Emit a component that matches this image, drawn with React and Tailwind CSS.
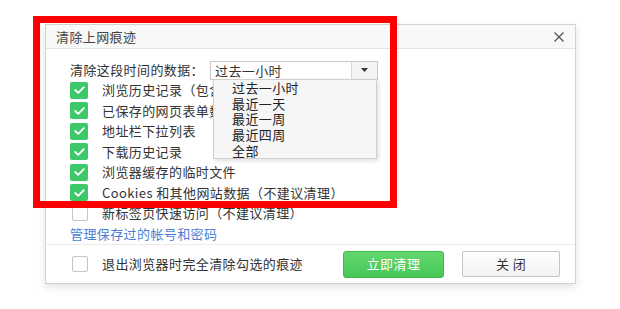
import React from "react";

function Check({ checked }) {
  if (checked) {
    return (
      <span className="flex h-[17px] w-[18px] items-center justify-center rounded-[2px] bg-[#3dc86a]">
        <svg width="11" height="8" viewBox="0 0 11 8" fill="none">
          <path d="M1.2 4 L4.2 6.8 L9.8 1.2" stroke="#fff" strokeWidth="1.8" strokeLinecap="round" strokeLinejoin="round" />
        </svg>
      </span>
    );
  }
  return <span className="ml-[2px] block h-[16px] w-[16px] rounded-[2px] border border-[#c4c4c4] bg-white" />;
}

function Row({ checked, children }) {
  return (
    <div className="flex h-[20.5px] items-center">
      <div className="w-[32px]">
        <Check checked={checked} />
      </div>
      <span className="text-[13px] leading-[18px] tracking-[0.4px] text-[#333]">{children}</span>
    </div>
  );
}

export default function App() {
  const rows = [
    [true, "浏览历史记录（包含访问过的网站）"],
    [true, "已保存的网页表单数据"],
    [true, "地址栏下拉列表"],
    [true, "下载历史记录"],
    [true, "浏览器缓存的临时文件"],
    [true, "Cookies 和其他网站数据（不建议清理）"],
    [false, "新标签页快速访问（不建议清理）"],
  ];
  return (
    <div
      className="relative h-[309px] w-[620px] overflow-hidden bg-white"
      style={{ fontFamily: '"Noto Sans CJK SC", "Noto Sans", sans-serif' }}
    >
      <div className="pl-[45px] pt-[24px]">
        <div className="w-[531px] border border-[#d2d2d2] bg-white shadow-[0_3px_8px_rgba(0,0,0,0.12)]">
          <div className="flex h-[24px] items-center justify-between border-b border-[#e4e4e4] bg-[#f8f8f8] pl-[10px] pr-[11px]">
            <span className="text-[13px] leading-[18px] tracking-[0.4px] text-[#444]">清除上网痕迹</span>
            <svg width="10" height="10" viewBox="0 0 10 10">
              <path d="M0.5 0.5 L9.5 9.5 M9.5 0.5 L0.5 9.5" stroke="#555" strokeWidth="1.3" />
            </svg>
          </div>
          <div className="relative pl-[24px] pt-[12px]">
            <div className="flex h-[18px] items-center">
              <span className="w-[140px] text-[13px] leading-[18px] tracking-[0.4px] text-[#333]">清除这段时间的数据：</span>
              <div className="flex h-[19px] w-[168px] border border-[#c8c8c8] bg-white">
                <span className="flex-1 pl-[4px] text-[13px] leading-[17px] tracking-[0.4px] text-[#333]">过去一小时</span>
                <div className="flex w-[26px] items-center justify-center border-l border-[#d8d8d8] bg-[#f4f4f4]">
                  <svg width="7" height="4" viewBox="0 0 7 4">
                    <path d="M0 0 L7 0 L3.5 4 Z" fill="#333" />
                  </svg>
                </div>
              </div>
            </div>
            <div className="absolute left-[167px] top-[30px] z-10 flex h-[80px] w-[164px] flex-col border border-[#cfcfcf] bg-[#f6f6f6] pl-[18px] shadow-[2px_2px_4px_rgba(0,0,0,0.12)]">
              {["过去一小时", "最近一天", "最近一周", "最近四周", "全部"].map((t) => (
                <div key={t} className="flex h-[15.8px] items-center text-[13px] leading-[15px] tracking-[0.4px] text-[#222]">
                  {t}
                </div>
              ))}
            </div>
            <div className="pt-[1px]">
              {rows.map(([c, t]) => (
                <Row key={t} checked={c}>
                  {t}
                </Row>
              ))}
            </div>
            <div className="flex h-[20.5px] items-center text-[13px] leading-[18px] tracking-[0.4px] text-[#4b7fd6]">管理保存过的帐号和密码</div>
          </div>
          <div className="flex h-[39px] items-center border-t border-[#ececec] pl-[24px]">
            <div className="w-[32px]">
              <Check checked={false} />
            </div>
            <span className="text-[13px] leading-[18px] tracking-[0.4px] text-[#333]">退出浏览器时完全清除勾选的痕迹</span>
            <div className="ml-auto flex gap-[18px] pr-[15px]">
              <button className="flex h-[27px] w-[101px] items-center justify-center rounded-[3px] border border-[#3fbb52] bg-gradient-to-b from-[#63d66d] to-[#45c75a] text-[13px] leading-[18px] tracking-[0.4px] text-white">
                立即清理
              </button>
              <button className="flex h-[26px] w-[98px] items-center justify-center rounded-[2px] border border-[#c6c6c6] bg-gradient-to-b from-[#ffffff] to-[#f2f2f2] text-[13px] leading-[18px] tracking-[0.4px] text-[#333]">
                关 闭
              </button>
            </div>
          </div>
        </div>
      </div>
      <div className="pointer-events-none absolute left-[33px] top-[16px] h-[192px] w-[364px] border-[7px] border-[#ff0000]" />
    </div>
  );
}
